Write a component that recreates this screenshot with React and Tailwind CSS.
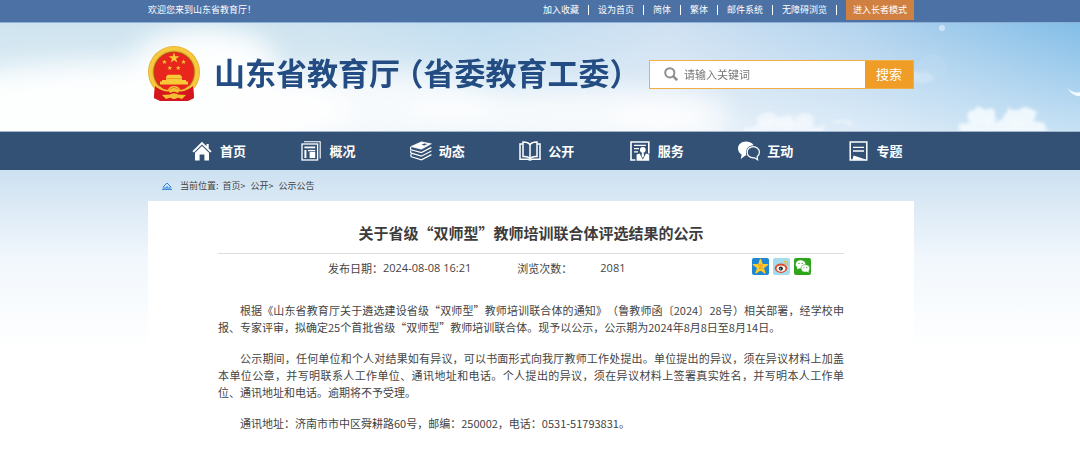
import React, { useState } from 'react'

const topLinks = ['加入收藏', '设为首页', '简体', '繁体', '邮件系统', '无障碍浏览']

const crumbs = ['首页', '公开', '公示公告']

const paragraphs = [
  '根据《山东省教育厅关于遴选建设省级“双师型”教师培训联合体的通知》（鲁教师函〔2024〕28号）相关部署，经学校申报、专家评审，拟确定25个首批省级“双师型”教师培训联合体。现予以公示，公示期为2024年8月8日至8月14日。',
  '公示期间，任何单位和个人对结果如有异议，可以书面形式向我厅教师工作处提出。单位提出的异议，须在异议材料上加盖本单位公章，并写明联系人工作单位、通讯地址和电话。个人提出的异议，须在异议材料上签署真实姓名，并写明本人工作单位、通讯地址和电话。逾期将不予受理。',
  '通讯地址：济南市市中区舜耕路60号，邮编：250002，电话：0531-51793831。'
]

function HomeIcon() {
  return (
    <svg viewBox="0 0 20 20" className="h-5 w-5" fill="#fff">
      <path d="M10 0.8 L14.5 5.2 V3 h2.2 v4.4 L19.6 10.2 L18.2 11.6 L10 3.6 L1.8 11.6 L0.4 10.2 Z" />
      <path d="M10 5 L17 11.8 V19.4 H12.4 V13.6 H7.6 V19.4 H3 V11.8 Z" />
    </svg>
  )
}

function OverviewIcon() {
  return (
    <svg viewBox="0 0 20 20" className="h-5 w-5" fill="none" stroke="#fff">
      <path d="M3 0.8 H19.2 V17.4" strokeWidth="1.1" />
      <rect x="1" y="3" width="15.6" height="16" strokeWidth="1.3" />
      <path d="M3.4 6.4 H14.2" strokeWidth="1.8" />
      <path d="M4.4 9 V17" strokeWidth="2" />
      <path d="M7 9.6 H14.2" strokeWidth="1.4" />
      <rect x="8.6" y="11" width="5.6" height="6" fill="#fff" stroke="none" />
    </svg>
  )
}

function StackIcon() {
  return (
    <svg viewBox="0 0 22 20" className="h-5 w-[22px]" fill="none" stroke="#fff" strokeWidth="1.2">
      <path d="M0.8 5.6 L11.5 0.8 L21.4 2.8 L11.4 8.2 Z" fill="#fff" strokeWidth="0.6" />
      <path d="M11.4 3.8 L14.4 2.4 L17.4 3 L14.4 4.4 Z" fill="#335175" stroke="none" />
      <path d="M0.8 6 Q0 8 1 8.8 L11.4 11.6 L21.4 6.4" />
      <path d="M1 9.4 Q0.2 11.4 1.2 12.2 L11.4 15.2 L21.4 10" />
      <path d="M1.2 13 Q0.4 15 1.4 15.8 L11.4 18.8 L21.4 13.6" />
    </svg>
  )
}

function BookIcon() {
  return (
    <svg viewBox="0 0 22 20" className="h-5 w-[22px]" fill="none" stroke="#fff" strokeWidth="1.5">
      <path d="M11 3.6 Q8.6 0.8 4 1 V15.6 Q8.6 15.2 11 17.4 Q13.4 15.2 18 15.6 V1 Q13.4 0.8 11 3.6 Z" />
      <path d="M11 3.6 V17" />
      <path d="M3.6 3 H1 V18.2 H9 Q11 19.8 13 18.2 H21 V3 H18.4" />
    </svg>
  )
}

function ServiceIcon() {
  return (
    <svg viewBox="0 0 20 20" className="h-5 w-5" fill="none" stroke="#fff">
      <path d="M5.4 19 H1 V1 H18.8 V12.4" strokeWidth="1.6" />
      <path d="M4 4.4 H15.8 M4 7.6 H9 M4 10.8 H8" strokeWidth="1.3" />
      <circle cx="12.8" cy="8.8" r="2.9" fill="#fff" stroke="none" />
      <path d="M6.6 19.8 V13.6 L9.6 12.4 L12.8 18.4 L16 12.4 L19.2 13.6 V19.8 Z" fill="#fff" stroke="none" />
      <path d="M12 11 H13.6 L14 15 L12.8 17 L11.6 15 Z" fill="#fff" stroke="none" />
    </svg>
  )
}

function ChatIcon() {
  return (
    <svg viewBox="0 0 22 20" className="h-5 w-[22px]">
      <path d="M7.8 0.6 C3.4 0.6 0 3.6 0 7.6 C0 10.2 1.4 12.4 3.6 13.6 L2.8 18 L7.4 14.6 H8.4 C7 8.6 10 4.2 15.6 4.2 C14.2 2 11.2 0.6 7.8 0.6 Z" fill="#fff" />
      <path d="M15.2 5.6 C11.8 5.6 9.2 8.2 9.2 11.2 C9.2 14.4 11.8 16.8 15.2 16.8 H16.6 L19.6 18.8 L19.2 15.6 C20.6 14.6 21.4 13 21.4 11.2 C21.4 8.2 18.6 5.6 15.2 5.6 Z" fill="none" stroke="#fff" strokeWidth="1.2" />
    </svg>
  )
}

function TopicIcon() {
  return (
    <svg viewBox="0 0 20 20" className="h-5 w-5" fill="none" stroke="#fff">
      <rect x="1.2" y="1" width="16.6" height="18" strokeWidth="1.5" />
      <path d="M4 6.4 H15 M4 10 H15" strokeWidth="1.4" />
      <path d="M3.4 18.8 L4.6 14.6 L17.4 18.8 Z" fill="#fff" stroke="none" />
    </svg>
  )
}

const navItems = [
  { label: '首页', Icon: HomeIcon },
  { label: '概况', Icon: OverviewIcon },
  { label: '动态', Icon: StackIcon },
  { label: '公开', Icon: BookIcon },
  { label: '服务', Icon: ServiceIcon },
  { label: '互动', Icon: ChatIcon },
  { label: '专题', Icon: TopicIcon }
]

const STAR = '0,-10 2.3,-3.1 9.5,-3.1 3.7,1.2 5.9,8.1 0,3.9 -5.9,8.1 -3.7,1.2 -9.5,-3.1 -2.3,-3.1'

function Emblem() {
  return (
    <svg viewBox="0 0 52 56" className="h-14 w-[52px] shrink-0" role="img" aria-label="国徽">
      <path d="M7 40 L6 52 L12 55 H40 L46 52 L45 40 Z" fill="#d5161c" />
      <circle cx="26" cy="26" r="26" fill="#e6ad2e" />
      <circle cx="26" cy="26" r="23.4" fill="none" stroke="#f6c93f" strokeWidth="3.6" />
      <circle cx="26" cy="26" r="20.6" fill="#a8560f" />
      <circle cx="26" cy="26" r="19.8" fill="#e8261e" />
      <g fill="#f9c937">
        <polygon points={STAR} transform="translate(26 12) scale(.56)" />
        <polygon points={STAR} transform="translate(16.4 16) scale(.26)" />
        <polygon points={STAR} transform="translate(35.6 16) scale(.26)" />
        <polygon points={STAR} transform="translate(21.8 22) scale(.26)" />
        <polygon points={STAR} transform="translate(30.2 22) scale(.26)" />
        <path d="M19.6 28.8 H32.4 L33.4 30.6 H34 V34 H38 V35.6 H40 V38.4 H12 V35.6 H14 V34 H18 V30.6 H18.6 Z" />
      </g>
      <path d="M18 32.6 H34" stroke="#d8821c" strokeWidth="0.6" />
      <path d="M7 40 Q14 46 20 44.4 Q23 41.4 26 41.4 Q29 41.4 32 44.4 Q38 46 45 40 L46 52 L39 54.8 L36 51 H16 L13 54.8 L6 52 Z" fill="#d5161c" />
      <path d="M11 40.6 Q17 45.6 20 44.4 L22 42 Q26 39.6 30 42 L32 44.4 Q35 45.6 41 40.6" fill="none" stroke="#f4c033" strokeWidth="1.6" />
      <path d="M20 45 Q26 38.6 32 45 L29.6 47 Q26 44.6 22.4 47 Z" fill="#f4c033" />
      <path d="M14 49 L22 48.6 Q26 45.8 30 48.6 L38 49 L34 53 L29.6 51.4 Q26 54.6 22.4 51.4 L18 53 Z" fill="#f4c033" />
    </svg>
  )
}

function Sky() {
  return (
    <svg viewBox="0 0 1080 109" preserveAspectRatio="none" className="absolute inset-0 h-full w-full" aria-hidden="true">
      <defs>
        <linearGradient id="sky" x1="0" x2="1" y1="0" y2="0">
          <stop offset="0" stopColor="#cfe4f0" />
          <stop offset="0.3" stopColor="#cde3ef" />
          <stop offset="0.45" stopColor="#c1ddf0" />
          <stop offset="0.62" stopColor="#cfe1f2" />
          <stop offset="0.8" stopColor="#b2d3ee" />
          <stop offset="1" stopColor="#82bde7" />
        </linearGradient>
        <linearGradient id="haze" x1="0" x2="0" y1="0" y2="1">
          <stop offset="0" stopColor="#fff" stopOpacity="0" />
          <stop offset="1" stopColor="#fff" stopOpacity="0.55" />
        </linearGradient>
        <filter id="soft" x="-30%" y="-60%" width="160%" height="220%"><feGaussianBlur stdDeviation="13" /></filter>
        <filter id="puff" x="-20%" y="-40%" width="140%" height="180%">
          <feTurbulence type="fractalNoise" baseFrequency="0.09" numOctaves="3" seed="4" result="noise" />
          <feDisplacementMap in="SourceGraphic" in2="noise" scale="14" xChannelSelector="R" yChannelSelector="G" />
          <feGaussianBlur stdDeviation="1.5" />
        </filter>
      </defs>
      <rect width="1080" height="109" fill="url(#sky)" />
      <rect width="1080" height="109" fill="url(#haze)" />
      <g filter="url(#soft)" fill="#fdfefe">
        <ellipse cx="130" cy="90" rx="220" ry="50" />
        <ellipse cx="205" cy="38" rx="70" ry="32" />
        <ellipse cx="360" cy="82" rx="140" ry="34" opacity="0.75" />
        <ellipse cx="560" cy="92" rx="160" ry="26" opacity="0.75" />
        <ellipse cx="670" cy="96" rx="60" ry="24" opacity="0.7" />
      </g>
      <g filter="url(#puff)" fill="#f6fbfe">
        <ellipse cx="784" cy="108" rx="42" ry="10" opacity="0.7" />
        <ellipse cx="776" cy="98" rx="18" ry="7" opacity="0.7" />
        <ellipse cx="806" cy="97" rx="10" ry="5" opacity="0.6" />
        <ellipse cx="842" cy="99" rx="9" ry="3" opacity="0.5" />
        <ellipse cx="923" cy="55" rx="11" ry="7" opacity="0.35" />
        <ellipse cx="1003" cy="107" rx="44" ry="9" opacity="0.85" />
        <ellipse cx="981" cy="93" rx="14" ry="9" opacity="0.85" />
        <ellipse cx="1020" cy="94" rx="17" ry="10" opacity="0.85" />
      </g>
      <circle cx="932" cy="46" r="15" fill="#c4def2" opacity="0.3" />
      <circle cx="942" cy="5" r="3" fill="#e8f3fb" opacity="0.6" />
      <path d="M1067 65 Q1072 74 1080 74 V70 Q1072 71 1067 65 Z" fill="#f4fafe" />
    </svg>
  )
}

function QzoneIcon() {
  return (
    <svg viewBox="0 0 17 17" className="h-[17px] w-[17px]">
      <rect width="17" height="17" rx="2" fill="#1e86d2" />
      <polygon points={STAR} transform="translate(8.5 8.9) scale(.76)" fill="#fdcb2c" stroke="#fdcb2c" strokeWidth="1.6" strokeLinejoin="round" />
      <path d="M6 7 H10.4 L7 10.2 H11" fill="none" stroke="#e88a18" strokeWidth="0.8" />
    </svg>
  )
}

function WeiboIcon() {
  return (
    <svg viewBox="0 0 17 17" className="h-[17px] w-[17px]">
      <rect width="17" height="17" rx="2" fill="#a4dcee" />
      <ellipse cx="8" cy="10.2" rx="6.2" ry="4.7" fill="#e2472a" />
      <ellipse cx="8" cy="10.6" rx="4.4" ry="3.1" fill="#fff" />
      <circle cx="7.8" cy="10.6" r="2.1" fill="#222" />
      <circle cx="7.2" cy="10.9" r="0.7" fill="#fff" />
      <path d="M11 3.4 Q15 3.2 14.8 7.4 M11.4 5.4 Q13.2 5.4 13 7.2" fill="none" stroke="#f0b53a" strokeWidth="1.1" />
    </svg>
  )
}

function WechatIcon() {
  return (
    <svg viewBox="0 0 17 17" className="h-[17px] w-[17px]">
      <rect width="17" height="17" rx="2" fill="#2fa41d" />
      <ellipse cx="6.6" cy="6.4" rx="4.9" ry="4.1" fill="#fff" />
      <path d="M3.4 9 L3.2 11.4 L5.8 10 Z" fill="#fff" />
      <ellipse cx="11.4" cy="10.4" rx="4.3" ry="3.7" fill="#fff" stroke="#2fa41d" strokeWidth="0.6" />
      <path d="M13 13.4 L14.6 14.8 L14.4 12.6 Z" fill="#fff" />
      <g fill="#2fa41d">
        <circle cx="5" cy="5.4" r="0.7" />
        <circle cx="8.2" cy="5.4" r="0.7" />
        <circle cx="10" cy="9.6" r="0.6" />
        <circle cx="12.8" cy="9.6" r="0.6" />
      </g>
    </svg>
  )
}

const shares = [
  { label: 'QQ空间', Icon: QzoneIcon },
  { label: '新浪微博', Icon: WeiboIcon },
  { label: '微信', Icon: WechatIcon }
]

// the site column sits a little left of centre
function Column({ className = '', children }) {
  return (
    <div className="pr-[18px]">
      <div className={`mx-auto max-w-[766px] ${className}`}>{children}</div>
    </div>
  )
}

export default function App() {
  const [keyword, setKeyword] = useState('')

  return (
    <div lang="zh-CN" className="min-h-screen bg-white bg-linear-to-b from-[#cde1f1] from-[170px] via-[#f1f7fc] via-[258px] to-white to-[350px] font-['Noto_Sans_CJK_SC',sans-serif] text-[#444] [text-spacing-trim:space-all]">
      {/* top bar */}
      <div className="border-b border-[#8fb0d6] bg-[#4b71a5] text-[9px] leading-5 text-white">
        <Column className="flex h-[22px] items-start justify-between">
          <span>欢迎您来到山东省教育厅！</span>
          <div className="flex items-center gap-[9px]">
            {topLinks.map(link => (
              <React.Fragment key={link}>
                <a href="#">{link}</a>
                <span className="h-2.5 w-px bg-white" />
              </React.Fragment>
            ))}
            <button type="button" className="h-5 bg-[#d08142] px-[7px]">进入长者模式</button>
          </div>
        </Column>
      </div>

      {/* banner */}
      <header className="relative border-b border-[#a3b6cd]">
        <Sky />
        <div className="relative">
          <Column className="flex h-[108px] items-center justify-between pb-1.5">
            <div className="flex items-center gap-3.5">
              <Emblem />
              <h1 className="flex gap-2 pb-1 text-[31px] leading-10 font-bold whitespace-nowrap text-[#234c82] [font-feature-settings:'halt']">
                <span>山东省教育厅</span>
                <span>（省委教育工委）</span>
              </h1>
            </div>
            <form className="flex h-[29px] w-[265px] border border-[#f3ad45] bg-white" onSubmit={e => e.preventDefault()}>
              <label htmlFor="keyword" className="flex items-center pr-1.5 pl-3.5">
                <svg viewBox="0 0 14 14" className="h-3.5 w-3.5" fill="none" stroke="#8f8f8f" strokeWidth="2" aria-label="搜索">
                  <circle cx="5.8" cy="5.8" r="4.6" />
                  <path d="M9.2 9.2 L13.2 13.2" strokeWidth="2.6" />
                </svg>
              </label>
              <input
                id="keyword"
                value={keyword}
                onChange={e => setKeyword(e.target.value)}
                placeholder="请输入关键词"
                className="min-w-0 flex-1 text-[11px] outline-none placeholder:text-[#777]"
              />
              <button type="submit" className="w-12 bg-[#f09d27] text-[13px] text-white">搜索</button>
            </form>
          </Column>
        </div>
      </header>

      {/* main nav */}
      <nav className="bg-[#335175]">
        <Column className="grid h-[38px] grid-cols-7">
          {navItems.map(({ label, Icon }) => (
            <a key={label} href="#" className="flex items-center gap-[7px] pl-[43px] text-[13px] font-bold whitespace-nowrap text-white">
              <span className="flex w-[22px] justify-center"><Icon /></span>
              {label}
            </a>
          ))}
        </Column>
      </nav>

      <Column>
        <div className="flex h-[31px] items-center gap-2 pl-3.5 text-[9px] text-[#444]">
          <svg viewBox="0 0 10 8" className="h-2 w-2.5" fill="none" stroke="#2f86d6" strokeWidth="1">
            <path d="M0.6 5.4 L5 1 L9.4 5.4 M2 4.6 V7.4 M8 4.6 V7.4 M0 7.4 H10 M4 7.4 V5 H6 V7.4" />
          </svg>
          <div className="flex">
            <span className="mr-1">当前位置:</span>
            {crumbs.map((c, i) => (
              <span key={c} className="mr-[5px]">
                <a href="#">{c}</a>{i < crumbs.length - 1 && '>'}
              </span>
            ))}
          </div>
        </div>

        <main className="min-h-[251px] bg-white px-[70px] pt-5">
          <h2 className="border-b border-[#ddd] pb-2 text-center text-[15px] leading-6 font-bold text-[#3c3c3c]">
            关于省级“双师型”教师培训联合体评选结果的公示
          </h2>
          <div className="flex h-7 items-center pr-[33px] pl-[110px] text-[11px]">
            <span>发布日期：</span>
            <span className="font-['Open_Sans','Noto_Sans_CJK_SC',sans-serif]">2024-08-08 16:21</span>
            <span className="ml-[46px]">浏览次数：</span>
            <span className="ml-7 font-['Open_Sans','Noto_Sans_CJK_SC',sans-serif]">2081</span>
            <div className="ml-auto flex gap-1 pb-1">
              {shares.map(({ label, Icon }) => (
                <button key={label} type="button" aria-label={label}><Icon /></button>
              ))}
            </div>
          </div>
          <article className="mt-5 space-y-3.5 text-justify text-[11px] leading-[17px]">
            {paragraphs.map(p => (
              <p key={p} className="indent-[22px]">{p}</p>
            ))}
          </article>
        </main>
      </Column>
    </div>
  )
}
